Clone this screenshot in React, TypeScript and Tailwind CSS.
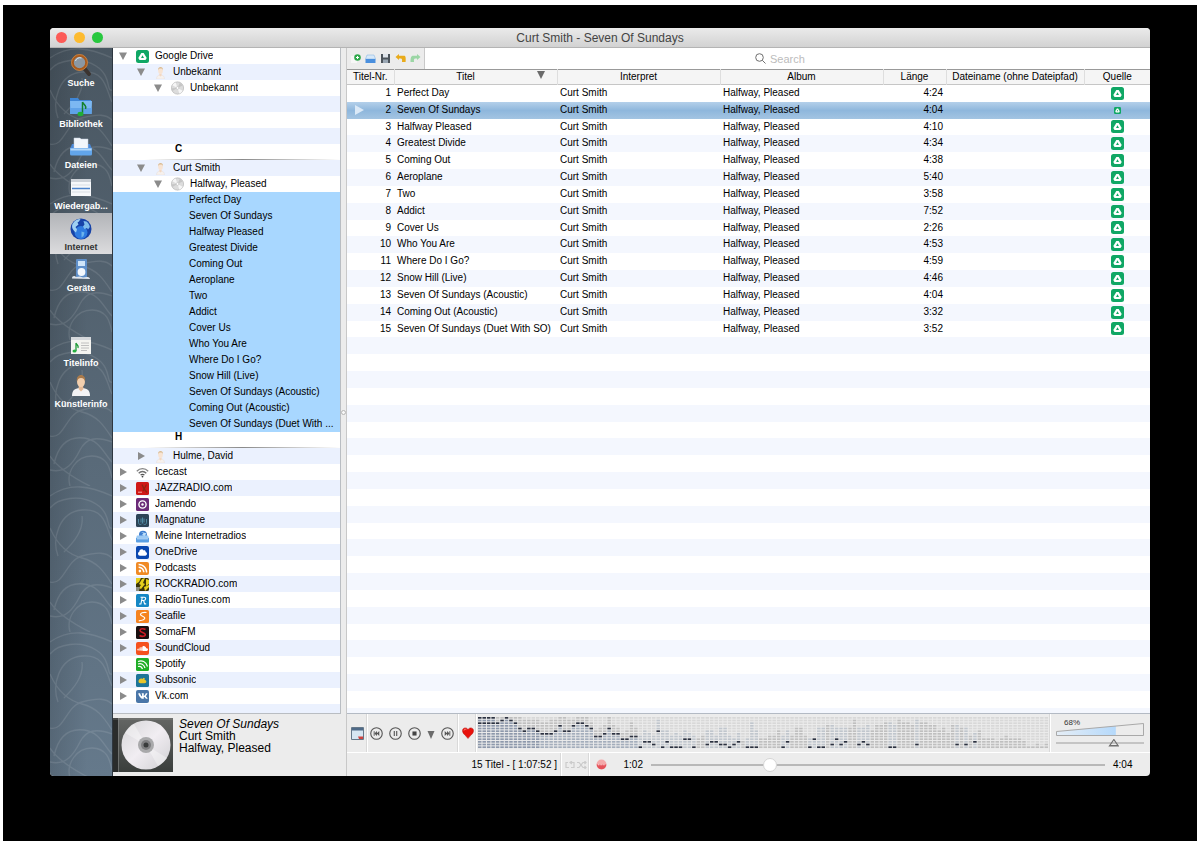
import { useState } from 'react';
import type { ReactNode } from 'react';
import { FaCloud, FaRss, FaSoundcloud, FaVk } from 'react-icons/fa';

interface Track {
  nr: number;
  title: string;
  length: string;
}

const TRACKS: Track[] = [
  { nr: 1, title: 'Perfect Day', length: '4:24' },
  { nr: 2, title: 'Seven Of Sundays', length: '4:04' },
  { nr: 3, title: 'Halfway Pleased', length: '4:10' },
  { nr: 4, title: 'Greatest Divide', length: '4:34' },
  { nr: 5, title: 'Coming Out', length: '4:38' },
  { nr: 6, title: 'Aeroplane', length: '5:40' },
  { nr: 7, title: 'Two', length: '3:58' },
  { nr: 8, title: 'Addict', length: '7:52' },
  { nr: 9, title: 'Cover Us', length: '2:26' },
  { nr: 10, title: 'Who You Are', length: '4:53' },
  { nr: 11, title: 'Where Do I Go?', length: '4:59' },
  { nr: 12, title: 'Snow Hill (Live)', length: '4:46' },
  { nr: 13, title: 'Seven Of Sundays (Acoustic)', length: '4:04' },
  { nr: 14, title: 'Coming Out (Acoustic)', length: '3:32' },
  { nr: 15, title: 'Seven Of Sundays (Duet With SO)', length: '3:52' },
];

const EMPTY_ROWS = Array.from({ length: 22 }, (_, i) => i);

/* ---------- small icons ---------- */

function DriveIcon({ className = 'size-[13px]' }: { className?: string }) {
  return (
    <svg viewBox="0 0 13 13" className={className} aria-hidden="true">
      <rect width="13" height="13" rx="2.500" fill="#10a765" />
      <path d="M5.300 2.900h2.400l3 5.100-1.200 2.100h-6L2.300 8z" fill="#fff" />
      <path d="M6.500 5.200 8 7.900H5z" fill="#10a765" />
    </svg>
  );
}

function PersonIcon() {
  return (
    <svg viewBox="0 0 13 13" className="size-[13px]" aria-hidden="true">
      <path d="M2.500 13c0-3 2-4.200 4-4.200s4 1.200 4 4.200z" fill="#f6f1ee" stroke="#e4dcd6" strokeWidth=".4" />
      <path d="M5.600 7.500h1.800l.3 2-1.200 1-1.200-1z" fill="#f3d8c2" />
      <ellipse cx="6.500" cy="4.800" rx="2.300" ry="3.200" fill="#f8e4d3" />
      <path d="M4.100 4.400C3.900 1.700 5.200 1 6.600 1s2.600 1 2.300 3.400C8.400 2.800 7.800 2.600 6.500 2.600S4.500 3 4.100 4.400z" fill="#d9bb92" />
    </svg>
  );
}

function DiscIcon() {
  return (
    <svg viewBox="0 0 14 14" className="size-[14px]" aria-hidden="true">
      <circle cx="7" cy="7" r="6.600" fill="#dcdcdc" stroke="#b4b4b4" strokeWidth=".7" />
      <path d="M7 7 1.500 4A6.300 6.300 0 0 1 5 1.200zM7 7l5.600 3A6.300 6.300 0 0 1 9 12.900z" fill="#f6f6f6" />
      <path d="M7 7 9.500 1.400a6.300 6.300 0 0 1 3 3zM7 7l-5.600 3.200a6 6 0 0 1-.7-3z" fill="#c6c6c6" />
      <circle cx="7" cy="7" r="1.500" fill="#fff" stroke="#aaa" strokeWidth=".5" />
    </svg>
  );
}

function Tile({ fill, children }: { fill: string; children?: ReactNode }) {
  return (
    <svg viewBox="0 0 13 13" className="size-[13px]" aria-hidden="true">
      <rect width="13" height="13" rx="1.500" fill={fill} />
      {children}
    </svg>
  );
}

function WifiIcon() {
  return (
    <svg viewBox="0 0 13 13" className="size-[13px]" fill="none" stroke="#858585" strokeWidth="1.300" aria-hidden="true">
      <path d="M.8 5.200c3.200-3.400 8.200-3.400 11.400 0" />
      <path d="M2.700 7.200c2.200-2.300 5.400-2.300 7.600 0" stroke="#707070" />
      <path d="M4.600 9.100c1.100-1.100 2.700-1.100 3.800 0" stroke="#555" />
      <circle cx="6.500" cy="10.600" r=".9" fill="#444" stroke="none" />
    </svg>
  );
}

function RadioFolderIcon() {
  return (
    <svg viewBox="0 0 14 13" className="h-[13px] w-[14px]" aria-hidden="true">
      <circle cx="7.500" cy="4.500" r="4.300" fill="#3f7fd0" />
      <path d="M5 1.500 8 3 6.500 5l3 1.500L11 3z" fill="#bfe0fa" />
      <path d="M1 5.500h12l1 3H0z" fill="#9ccaf4" />
      <path d="M0 8h14v4a1 1 0 0 1-1 1H1a1 1 0 0 1-1-1z" fill="#5b9fe3" />
      <path d="M1 8.500h12v1H1z" fill="#cfe6fb" />
    </svg>
  );
}

function Arrow({ open }: { open: boolean }) {
  return (
    <svg viewBox="0 0 10 10" className="size-[10px]" aria-hidden="true">
      <path d={open ? 'M1 1.500h8L5 9z' : 'M2 1v8l7-4z'} fill="#8b8b8b" />
    </svg>
  );
}

function Badge({ className, children }: { className: string; children: ReactNode }) {
  return <span className={`flex size-[13px] items-center justify-center rounded-xs text-white ${className}`}>{children}</span>;
}

const SERVICES: { name: string; leaf?: boolean; icon: ReactNode }[] = [
  { name: 'Icecast', icon: <WifiIcon /> },
  {
    name: 'JAZZRADIO.com',
    icon: (
      <Tile fill="#cf1818">
        <path d="M6 2.500 8 7l3 3.500M10.500 2.500 7 9" stroke="#8f2413" strokeWidth="1.300" fill="none" />
        <path d="M2 10.200h4" stroke="#f5a9a0" />
      </Tile>
    ),
  },
  {
    name: 'Jamendo',
    icon: (
      <Tile fill="#6b2a78">
        <circle cx="6.500" cy="6.500" r="3.600" fill="none" stroke="#fff" strokeWidth="1.400" />
        <circle cx="6.500" cy="6.500" r="1.200" fill="#fff" />
      </Tile>
    ),
  },
  {
    name: 'Magnatune',
    icon: (
      <Tile fill="#2d4457">
        <path d="M2.500 5v3.500c0 2 2 2.500 3 1.500M10.500 5v3.500c0 2-2 2.500-3 1.500M5 4.500v4M6.500 3.500v6M8 4.500v4" stroke="#5592ab" strokeWidth=".9" fill="none" />
      </Tile>
    ),
  },
  { name: 'Meine Internetradios', icon: <RadioFolderIcon /> },
  { name: 'OneDrive', icon: <Badge className="bg-[#0a47b0]"><FaCloud className="size-[9px]" /></Badge> },
  { name: 'Podcasts', icon: <Badge className="bg-[#f08a24]"><FaRss className="size-[10px]" /></Badge> },
  {
    name: 'ROCKRADIO.com',
    icon: (
      <Tile fill="#3a3408">
        <path d="M0 0h5L3 4 0 6zM6 1l3-1-2 5 2 1-4 5-2-1 2-3-2-1zM10 1l3 1v4l-3 2zM8 9l5-2v2l-4 4z" fill="#e5cf1c" />
        <path d="M0 9h4l-1 4H0z" fill="#8d8d7d" />
      </Tile>
    ),
  },
  {
    name: 'RadioTunes.com',
    icon: (
      <Tile fill="#1587c4">
        <path d="M4.500 3.200h3.600c2.200 0 2 3.200-.3 3.300H5.600M6.300 3.200 4.900 10H3M7.600 6.500l1 3.400h1.600" stroke="#fff" strokeWidth="1.100" fill="none" />
      </Tile>
    ),
  },
  {
    name: 'Seafile',
    icon: (
      <Tile fill="#f5831f">
        <path d="M10.500 2.500C7 2 4.500 3 4.500 4.600S9 6.300 8.800 8 5.500 10.500 2.800 10.800" stroke="#fff" strokeWidth="1.200" fill="none" />
      </Tile>
    ),
  },
  {
    name: 'SomaFM',
    icon: (
      <Tile fill="#1a1010">
        <path d="M9.500 3.500C7.500 2.300 4 2.300 4 4.500S9.300 6.200 9.300 8.500 5.500 10.700 3.500 9.500" stroke="#d01c24" strokeWidth="1.600" fill="none" />
      </Tile>
    ),
  },
  { name: 'SoundCloud', icon: <Badge className="bg-[#f5511e]"><FaSoundcloud className="size-[11px]" /></Badge> },
  {
    name: 'Spotify',
    leaf: true,
    icon: (
      <Tile fill="#1fae27">
        <path d="M2 3.500c4-1.500 8 0 9.500 5M2 6c3-1 6 .2 7 4M2 8.500c2-.6 3.700.2 4.500 2.500" stroke="#fff" strokeWidth="1.200" fill="none" />
      </Tile>
    ),
  },
  {
    name: 'Subsonic',
    icon: (
      <Tile fill="#1d7599">
        <path d="M2.500 7.500C2.500 5 5 4 6.500 5l1-1.200L9 4.500l-.6 1.200C11 6 11 9 8.500 9.200H4.500c-1.200 0-2-.7-2-1.700z" fill="#e8c52a" />
      </Tile>
    ),
  },
  { name: 'Vk.com', icon: <Badge className="bg-[#4a76a8]"><FaVk className="size-[10px]" /></Badge> },
];

/* ---------- left icon bar ---------- */

const NAV_ICONS = {
  search: (
    <>
      <path d="m15 15 5 6" stroke="#3b3430" strokeWidth="4" strokeLinecap="round" />
      <circle cx="10.500" cy="9.500" r="7" fill="#8b98a3" stroke="#a85a1c" strokeWidth="2.600" />
      <circle cx="10.500" cy="9.500" r="8" fill="none" stroke="#e09a52" strokeWidth=".6" />
      <path d="M6.500 8a4.500 4.500 0 0 1 6-3" stroke="#e2e8ee" fill="none" />
    </>
  ),
  library: (
    <>
      <path d="M1 4h8l1.500 2H22v14H1z" fill="#3f86d6" />
      <path d="M1 7h22l-.5 13h-21z" fill="#7cb8f2" />
      <path d="M1 14h22l-.5 6h-21z" fill="#5fa2e8" />
      <path d="M13.500 8v11M13.500 8c1 3 4.500 3 3 7" stroke="#14802c" strokeWidth="1.500" fill="none" />
      <ellipse cx="11.500" cy="20" rx="3" ry="2.200" fill="#1fae35" />
    </>
  ),
  files: (
    <>
      <path d="M3 9h18l2 5H1z" fill="#4a88d8" />
      <path d="M5 3h6l1 1h7v11H5z" fill="#f2f6fb" stroke="#c2cedd" strokeWidth=".5" />
      <path d="M1 13h22v6a1.500 1.500 0 0 1-1.500 1.500h-19A1.500 1.500 0 0 1 1 19z" fill="#62a5ea" />
      <path d="M1.500 13.500h21v2h-21z" fill="#b3d7f8" />
    </>
  ),
  playlist: (
    <>
      <path d="M2 3h20v17H2z" fill="#f6f8fa" />
      <path d="M2 3h20v3H2z" fill="#cdd2d8" />
      <path d="M3 12.500h18" stroke="#4d84cc" strokeWidth="1.300" />
      <path d="M3 9h18M3 16h18" stroke="#d9dee4" />
    </>
  ),
  globe: (
    <>
      <circle cx="12" cy="12" r="10.500" fill="#1743a8" />
      <circle cx="12" cy="15.500" r="6.500" fill="#2f7be0" />
      <path d="M3.500 7C6 3 9 1.900 11.500 2L10 4.500 8.500 5.500l1 2-3 2.500 1.500 2.500-1 3c-3-2-4.800-5-3.500-8.500z" fill="#9fd0f2" />
      <path d="m14.500 4 3 .5c2 1.500 3.300 4 3.300 5.500l-1.800 2.500-1-1.500-2.500 1-1.500-2.500 1.500-2z" fill="#7fbdec" />
      <path d="m12.500 14.500 3 1-1 3.500-2 1.500z" fill="#6db4ec" />
    </>
  ),
  device: (
    <>
      <rect x="7" y="1" width="11" height="19" rx="1" fill="#5f8fc9" />
      <rect x="9" y="3" width="7" height="5" fill="#cfe4f8" />
      <circle cx="12.500" cy="14" r="3.900" fill="#f3f7fc" />
      <path d="M3 20.500c0-3 3-3 4-1.500l4-.5 3 1c3-1 7-1 7 1.500z" fill="#dfe5ec" />
    </>
  ),
  title: (
    <>
      <path d="M2 4h20v17H2z" fill="#f4f4f0" />
      <path d="M2 4h20v3H2z" fill="#d5d8dc" />
      <path d="M12 10h8M12 12.500h8M12 15h8M12 17.500h6" stroke="#b9b9b9" strokeWidth=".9" />
      <path d="M7 10v8M7 10c.5 2 3 2 2 5" stroke="#1f9b36" strokeWidth="1.300" fill="none" />
      <ellipse cx="5.500" cy="18" rx="2" ry="1.500" fill="#27b040" />
    </>
  ),
  artist: (
    <>
      <path d="M3 22c0-6 3-8 9-8s9 2 9 8z" fill="#f2f2f4" />
      <path d="M10 11h4l.5 4-2.500 2.500L9.500 15z" fill="#e5b995" />
      <ellipse cx="12" cy="7.500" rx="4" ry="5.500" fill="#f2cfae" />
      <path d="M8 8c-.8-5 1.500-7 4-7s4.800 2 4 7c-.5-3-1.500-4-4-4s-3.500 1-4 4z" fill="#a97a4b" />
    </>
  ),
};

const NAV_MAIN = [
  { label: 'Suche', icon: NAV_ICONS.search },
  { label: 'Bibliothek', icon: NAV_ICONS.library },
  { label: 'Dateien', icon: NAV_ICONS.files },
  { label: 'Wiedergab...', icon: NAV_ICONS.playlist },
  { label: 'Internet', icon: NAV_ICONS.globe },
  { label: 'Geräte', icon: NAV_ICONS.device },
];

const NAV_INFO = [
  { label: 'Titelinfo', icon: NAV_ICONS.title },
  { label: 'Künstlerinfo', icon: NAV_ICONS.artist },
];

function NavButton({ label, icon, active, onClick }: { label: string; icon: ReactNode; active: boolean; onClick: () => void }) {
  return (
    <button
      type="button"
      onClick={onClick}
      className={`flex h-[41px] w-full flex-col items-center pt-1 text-[9px] leading-3 font-bold ${
        active ? 'bg-linear-to-b from-[#b2b4b8] to-[#dcdcde] text-[#333]' : 'text-white'
      }`}
    >
      <svg viewBox="0 0 24 24" className="size-6 shrink-0" fill="none" aria-hidden="true">
        {icon}
      </svg>
      {label}
    </button>
  );
}

function NavBar() {
  const [active, setActive] = useState('Internet');

  return (
    <nav className="relative w-[63px] shrink-0 border-r border-[#2e3740] bg-linear-to-b from-[#4a5762] to-[#65798b]">
      <svg className="absolute inset-0 size-full" fill="none" stroke="#fff" strokeOpacity=".1" strokeWidth="1.300" aria-hidden="true">
        <defs>
          <linearGradient id="shade">
            <stop offset="0" stopColor="#000" stopOpacity=".14" />
            <stop offset=".6" stopColor="#000" stopOpacity="0" />
          </linearGradient>
          <pattern id="swirl" width="62" height="146" patternUnits="userSpaceOnUse">
            <path d="M0 10C20-4 40 0 62 10M0 22c8-10 30-14 46-4s10 26 16 24M8 70c-6-16 0-44 24-46s24 18 30 30M0 42c6 14 16 26 32 30s22 14 30 26M14 66c10-10 20-22 18-36M0 96c14 4 16-22 32-26s24-4 30 2M4 124c4-18 14-28 30-26s20 16 28 24M0 130c16 4 24-8 30-20s16-14 32-8M20 146c-4-14 6-30 22-30s18 14 20 22M0 116c8 12 24 22 40 30" />
          </pattern>
        </defs>
        <rect width="100%" height="100%" fill="url(#shade)" stroke="none" />
        <rect width="100%" height="100%" fill="url(#swirl)" stroke="none" />
      </svg>
      <div className="relative pt-px">
        {NAV_MAIN.map((item) => (
          <NavButton key={item.label} {...item} active={active === item.label} onClick={() => setActive(item.label)} />
        ))}
        <div className="h-[34px]" />
        {NAV_INFO.map((item) => (
          <NavButton key={item.label} {...item} active={active === item.label} onClick={() => setActive(item.label)} />
        ))}
      </div>
    </nav>
  );
}

/* ---------- source tree ---------- */

const INDENTS = ['pl-[5px]', 'pl-[23px]', 'pl-10'];

interface TreeRowProps {
  level: number;
  label: string;
  icon: ReactNode;
  open?: boolean;
  leaf?: boolean;
  striped?: boolean;
}

function TreeRow({ level, label, icon, open = false, leaf = false, striped = false }: TreeRowProps) {
  return (
    <li className={`flex h-4 items-center ${INDENTS[level]} ${striped ? 'bg-[#ebf1fe]' : 'bg-white'}`}>
      {leaf ? (
        <span className="w-[10px]" />
      ) : (
        <button type="button" aria-label={`${label} aufklappen`}>
          <Arrow open={open} />
        </button>
      )}
      <span className="mr-[6px] ml-2 flex w-[13px] shrink-0 justify-center">{icon}</span>
      <span className="truncate">{label}</span>
    </li>
  );
}

function LetterRow({ letter }: { letter: string }) {
  return (
    <li className="flex h-4 flex-col justify-between bg-white">
      <span className="pl-[62px] leading-[9px] font-bold">{letter}</span>
      <span className="ml-8 h-px bg-linear-to-r from-transparent via-[#8a8a8a] to-transparent" />
    </li>
  );
}

function SourceTree() {
  return (
    <ul className="flex flex-1 flex-col overflow-hidden border-r border-b border-[#b9bdc2] bg-[#ebf1fe] text-[10px] leading-4">
      <TreeRow level={0} label="Google Drive" icon={<DriveIcon />} open />
      <TreeRow level={1} label="Unbekannt" icon={<PersonIcon />} open striped />
      <TreeRow level={2} label="Unbekannt" icon={<DiscIcon />} open />
      <li className="h-4" />
      <li className="h-4 bg-white" />
      <li className="h-4" />
      <LetterRow letter="C" />
      <TreeRow level={1} label="Curt Smith" icon={<PersonIcon />} open striped />
      <TreeRow level={2} label="Halfway, Pleased" icon={<DiscIcon />} open />
      {TRACKS.map((track) => (
        <li key={track.nr} className="h-4 truncate bg-[#a8d7ff] pl-[76px]">
          {track.title.replace('SO)', '...')}
        </li>
      ))}
      <LetterRow letter="H" />
      <TreeRow level={1} label="Hulme, David" icon={<PersonIcon />} striped />
      {SERVICES.map((service, i) => (
        <TreeRow key={service.name} level={0} label={service.name} icon={service.icon} leaf={service.leaf} striped={i % 2 === 1} />
      ))}
    </ul>
  );
}

function NowPlaying() {
  return (
    <div className="flex h-[62px] shrink-0 gap-[6px] pt-[4px]">
      <svg viewBox="0 0 60 54" className="h-[54px] w-[60px] shrink-0" aria-hidden="true">
        <defs>
          <linearGradient id="case" x2="0" y2="1">
            <stop offset="0" stopColor="#646664" />
            <stop offset="1" stopColor="#3a3e3c" />
          </linearGradient>
          <linearGradient id="disc" x2="1" y2="1">
            <stop offset="0" stopColor="#d5d5d7" />
            <stop offset=".5" stopColor="#f1edf2" />
            <stop offset="1" stopColor="#cfcfd2" />
          </linearGradient>
        </defs>
        <rect width="60" height="54" fill="url(#case)" />
        <rect width="5" height="54" fill="#2a2c2b" />
        <path d="M5.500 0v54M0 1h60" stroke="#8a8c8a" strokeWidth=".6" />
        <circle cx="33" cy="27" r="24.500" fill="url(#disc)" />
        <path d="M33 27 12 15a24 24 0 0 1 9-9zM33 27l21 13a24 24 0 0 1-9 8z" fill="#fff" opacity=".35" />
        <circle cx="33" cy="27" r="8" fill="#a9a9ab" />
        <circle cx="33" cy="27" r="5" fill="#7e7e80" />
        <circle cx="33" cy="27" r="2.500" fill="#393b3b" />
      </svg>
      <div className="text-[12px] leading-3">
        <p className="italic">Seven Of Sundays</p>
        <p>Curt Smith</p>
        <p>Halfway, Pleased</p>
      </div>
    </div>
  );
}

/* ---------- playlist ---------- */

const TOOLS = [
  {
    label: 'Neu',
    icon: (
      <>
        <path d="M1 3h6v7H1z" fill="#f7f7f7" />
        <circle cx="7.500" cy="4.500" r="3.300" fill="#2fa84b" />
        <path d="M7.500 3v3M6 4.500h3" stroke="#fff" />
      </>
    ),
  },
  {
    label: 'Öffnen',
    icon: (
      <>
        <path d="M2 2h7l1.500 4h-10z" fill="#d7e8f8" stroke="#7fb0e0" strokeWidth=".5" />
        <path d="M.5 6h10v4h-10z" fill="#4a8fde" />
      </>
    ),
  },
  {
    label: 'Speichern',
    icon: (
      <>
        <path d="M1 1h9v9H1z" fill="#4d545b" />
        <path d="M3 1h5v3.500H3z" fill="#dfe4ea" />
        <path d="M3 6.500h5V10H3z" fill="#9aa7b4" />
      </>
    ),
  },
  { label: 'Rückgängig', icon: <path d="M.5 4 4 1v1.700h5c1.500 0 2 1.500 1.600 6.300H7c.4-3-.3-3.500-1-3.500H4V7z" fill="#e9ab1b" /> },
  { label: 'Wiederholen', icon: <path d="M10.500 4 7 1v1.700H3C1.500 2.700.5 4 .5 9H4c-.3-3 .3-3.500 1-3.500h2V7z" fill="#9bd6a5" /> },
];

function Toolbar() {
  return (
    <div className="flex h-[21px] shrink-0 bg-[#ececec]">
      <div className="flex items-center gap-1 border-r border-[#c9c9c9] px-[3px]">
        {TOOLS.map((tool) => (
          <button key={tool.label} type="button" aria-label={tool.label}>
            <svg viewBox="0 0 11 11" className="size-[11px]" aria-hidden="true">
              {tool.icon}
            </svg>
          </button>
        ))}
      </div>
      <label className="flex flex-1 items-center justify-center gap-1 bg-white">
        <svg viewBox="0 0 11 11" className="size-[11px]" fill="none" stroke="#6f6f6f" aria-hidden="true">
          <circle cx="4.500" cy="4.500" r="3.800" />
          <path d="m7.300 7.300 3.200 3.200" />
        </svg>
        <input type="text" placeholder="Search" aria-label="Suche" className="h-4 w-[50px] text-[11px] leading-4 outline-none placeholder:text-[#bcbcbc]" />
      </label>
    </div>
  );
}

const TH = 'h-[14px] border-r border-[#dedede] font-normal';
const ROW = 'h-[17px] [&:nth-child(6n+3)]:h-4 even:bg-[#f4f7fe]';

function Playlist() {
  const [current] = useState(2);

  return (
    <div className="flex-1 border-b border-[#b3bac4] bg-[#f4f7fe]">
      <table className="w-full table-fixed border-collapse bg-white text-[10px] leading-[14px]">
        <colgroup>
          <col className="w-[47px]" />
          <col className="w-[163px]" />
          <col className="w-[163px]" />
          <col className="w-[163px]" />
          <col className="w-[63px]" />
          <col />
          <col className="w-[66px]" />
        </colgroup>
        <thead className="border-t border-b border-t-[#999] border-b-[#c6c6c6] bg-[#f5f5f5]">
          <tr>
            <th className={TH}>Titel-Nr.</th>
            <th className={TH}>
              <span className="flex items-center">
                <span className="flex-1">Titel</span>
                <svg viewBox="0 0 8 8" className="mr-3 mb-1 size-2" aria-hidden="true">
                  <path d="M0 0h8L4 8z" fill="#6b6b6b" />
                </svg>
              </span>
            </th>
            <th className={TH}>Interpret</th>
            <th className={TH}>Album</th>
            <th className={TH}>Länge</th>
            <th className={`${TH} whitespace-nowrap`}>Dateiname (ohne Dateipfad)</th>
            <th className="font-normal">Quelle</th>
          </tr>
        </thead>
        <tbody>
          {TRACKS.map((track) => {
            const selected = track.nr === current;
            return (
              <tr key={track.nr} className={selected ? 'h-[17px] bg-linear-to-b from-[#b4d0ea] via-[#8fb7dc] to-[#a3c4e2]' : ROW}>
                <td className="pr-[3px]">
                  <span className="flex items-center justify-end">
                    {selected && (
                      <svg viewBox="0 0 9 10" className="mr-auto ml-2 h-[10px] w-[9px]" aria-hidden="true">
                        <path d="M0 0v10l9-5z" fill="#dbe9f7" />
                      </svg>
                    )}
                    {track.nr}
                  </span>
                </td>
                <td className="pl-[3px] whitespace-nowrap">{track.title}</td>
                <td className="pl-[3px]">Curt Smith</td>
                <td className="pl-[3px]">Halfway, Pleased</td>
                <td className="pr-[3px] text-right">{track.length}</td>
                <td />
                <td>
                  <DriveIcon className={selected ? 'mx-auto size-[7px]' : 'mx-auto size-[13px]'} />
                </td>
              </tr>
            );
          })}
          {EMPTY_ROWS.map((row) => (
            <tr key={row} className={ROW}>
              <td colSpan={7} />
            </tr>
          ))}
        </tbody>
      </table>
    </div>
  );
}

/* ---------- spectrum ---------- */

// row of the dark peak marker per column, -1 for none (0 is the top row)
const PEAKS = [
  0, 0, 0, 0, 2, 1, 0, 1, 2, 4, 5, 4, 4, 5, 6, 6, 6, 5, 3, 5, 5, 3, 2, 2, 3, 4, 7, 7, 6, 4, 6, 6,
  8, 8, 7, 7, 11, 9, 9, 10, 5, 11, 9, 11, 11, 11, 8, 8, 11, -1, -1, 10, 9, 9, 10, 10, 11, 10, 9, -1, 11, 11, 11, -1,
  -1, -1, -1, -1, 11, 9, -1, -1, -1, -1, 11, 8, 11, 11, -1, 10, 8, 10, 9, -1, -1, 10, 9, 10, -1, -1, -1, -1, 11, 11, -1, -1,
  -1, -1, 10, -1, -1, -1, -1, -1, -1, -1, -1, 10, -1, 10, -1, 9, -1, -1, -1, -1, -1, -1, -1, -1, -1, -1, -1, -1, -1, -1, -1, -1,
];

// top row of the grey bar per column
const TOPS = [
  0, 0, 0, 0, 0, 0, 0, 0, 0, 0, 1, 1, 1, 1, 2, 2, 1, 1, 0, 0, 1, 1, 0, 0, 0, 2, 5, 4, 3, 0, 3, 4,
  6, 5, 2, 4, 7, 5, 6, 7, 1, 5, 5, 7, 6, 7, 5, 6, 7, 8, 7, 5, 5, 7, 4, 4, 7, 8, 6, 9, 8, 2, 5, 8,
  8, 7, 7, 5, 7, 5, 7, 4, 4, 7, 8, 8, 4, 4, 3, 3, 4, 4, 4, 4, 1, 4, 4, 3, 5, 3, 3, 2, 2, 3, 1, 2,
  2, 3, 1, 2, 2, 3, 3, 5, 4, 6, 3, 3, 4, 4, 7, 6, 5, 8, 8, 8, 9, 8, 7, 8, 8, 8, 9, 11, 11, 10, 11, 10,
];

function cellColor(col: number, row: number) {
  if (row === PEAKS[col] || (col < 4 && row === 2)) return '#2b3140';
  if (col < 36 && PEAKS[col] >= 0 && row > PEAKS[col]) return col < 14 ? '#8d98ab' : '#a3adbb';
  if (row >= TOPS[col]) return col >= 36 && PEAKS[col] >= 0 ? '#c0c6cd' : '#bfbfbf';
  return '#d8d8d8';
}

function Spectrum() {
  return (
    <svg viewBox="0 0 1024 32" preserveAspectRatio="none" className="h-8 w-0 flex-1" aria-hidden="true">
      {PEAKS.map((_, col) =>
        Array.from({ length: 12 }, (_, row) => (
          <rect key={`${col}-${row}`} x={col * 8} y={row * 2.667} width="6.300" height="1.700" fill={cellColor(col, row)} />
        )),
      )}
    </svg>
  );
}

/* ---------- player ---------- */

function RoundButton({ label, children }: { label: string; children: ReactNode }) {
  return (
    <button type="button" aria-label={label}>
      <svg viewBox="0 0 14 14" className="size-[13px]" fill="none" stroke="#555" aria-hidden="true">
        <circle cx="7" cy="7" r="6.200" strokeWidth="1.200" />
        {children}
      </svg>
    </button>
  );
}

function Divider() {
  return <span className="w-[2px] shrink-0 self-stretch border-l border-[#d9d9d9] bg-white" />;
}

function Volume() {
  const [volume, setVolume] = useState(68);

  return (
    <div className="flex w-[88px] shrink-0 flex-col">
      <div className="relative h-[19px]">
        <svg viewBox="0 0 88 19" className="size-full" aria-hidden="true">
          <defs>
            <linearGradient id="volume">
              <stop offset="0" stopColor="#e6eef6" />
              <stop offset="1" stopColor="#b5d9fb" />
            </linearGradient>
            <clipPath id="wedge">
              <path d="M.5 13.500 87.500 5.500v12H.5z" />
            </clipPath>
          </defs>
          <rect width={volume * 0.88} height="19" fill="url(#volume)" clipPath="url(#wedge)" />
          <path d="M.5 13.500 87.500 5.500v12H.5z" fill="none" stroke="#a9a9a9" />
        </svg>
        <span className="absolute top-0 left-2 text-[8px] leading-[10px] text-[#333]">{volume}%</span>
      </div>
      <input
        type="range"
        aria-label="Lautstärke"
        value={volume}
        onChange={(e) => setVolume(Number(e.target.value))}
        className="h-3 w-full appearance-none bg-[linear-gradient(#c4c4c4,#c4c4c4)] bg-size-[100%_2px] bg-center bg-no-repeat [&::-webkit-slider-thumb]:h-[8px] [&::-webkit-slider-thumb]:w-[11px] [&::-webkit-slider-thumb]:appearance-none [&::-webkit-slider-thumb]:bg-[#6f6f6f] [&::-webkit-slider-thumb]:[clip-path:polygon(50%_0,100%_100%,0_100%,50%_0,50%_25%,22%_82%,78%_82%,50%_25%)]"
      />
    </div>
  );
}

function Controls() {
  return (
    <div className="flex h-[38px] items-center pr-[6px] pl-1">
      <button type="button" aria-label="Fenster">
        <svg viewBox="0 0 13 13" className="size-[13px]" aria-hidden="true">
          <path d="M.5.5h12v12H.5z" fill="#d6e6f2" stroke="#66788a" />
          <path d="M1 1h11v2.500H1z" fill="#4f6a88" />
          <path d="M7 9.500h5V12H8z" fill="#cf4440" />
        </svg>
      </button>
      <span className="mx-[2px] flex self-stretch"><Divider /></span>
      <div className="flex items-center gap-[6px]">
        <RoundButton label="Zurück">
          <path d="M4.500 4.500v5" />
          <path d="M10 4.300v5.400L7.200 7zM7.500 4.300v5.400L4.800 7z" fill="#555" stroke="none" />
        </RoundButton>
        <RoundButton label="Pause">
          <path d="M5.700 4.300v5.400M8.300 4.300v5.400" strokeWidth="1.200" />
        </RoundButton>
        <RoundButton label="Stopp">
          <path d="M4.800 4.800h4.400v4.400H4.800z" fill="#444" stroke="none" />
        </RoundButton>
        <button type="button" aria-label="Optionen" className="pt-1">
          <svg viewBox="0 0 8 8" className="size-2" aria-hidden="true">
            <path d="M.5 0h7L4 8z" fill="#6b6b6b" />
          </svg>
        </button>
        <RoundButton label="Weiter">
          <path d="M9.500 4.500v5" />
          <path d="M4 4.300v5.400L6.800 7zM6.500 4.300v5.400L9.200 7z" fill="#555" stroke="none" />
        </RoundButton>
      </div>
      <span className="mx-[3px] flex self-stretch"><Divider /></span>
      <button type="button" aria-label="Lieben">
        <svg viewBox="0 0 12 12" className="size-3" aria-hidden="true">
          <path d="M6 11.500C4.500 9 .5 7 .5 3.800.5.500 4.500 0 6 2.500 7.500 0 11.500.5 11.500 3.800 11.500 7 7.500 9 6 11.500z" fill="#e8110c" stroke="#b50c08" strokeWidth=".5" />
          <path d="M2 3.500C2.200 2.200 3.500 1.800 4.300 2.600" stroke="#ff8a80" fill="none" />
        </svg>
      </button>
      <span className="mx-px flex self-stretch"><Divider /></span>
      <Spectrum />
      <span className="mr-[5px] flex self-stretch"><Divider /></span>
      <Volume />
    </div>
  );
}

function StatusBar() {
  const [position, setPosition] = useState(62);

  return (
    <div className="flex h-6 items-center border-t border-white text-[10px] leading-3">
      <span className="w-[210px] text-right">15 Titel - [ 1:07:52 ]</span>
      <span className="mx-[3px] flex self-stretch"><Divider /></span>
      <button type="button" aria-label="Wiederholung und Zufall">
        <svg viewBox="0 0 22 8" className="h-2 w-[22px]" fill="none" stroke="#cbcbcb" strokeWidth="1.200" aria-hidden="true">
          <path d="M3 1.500H1v5h3M6 6.500h3v-5H5M7 0 5 1.500 7 3" />
          <path d="M12 1.500h2l4 5h3M12 6.500h2l4-5h3M19.500 0 21 1.500 19.500 3M19.500 5 21 6.500 19.500 8" />
        </svg>
      </button>
      <span className="ml-px flex self-stretch"><Divider /></span>
      <button type="button" aria-label="Aufnahme" className="mx-[6px]">
        <svg viewBox="0 0 11 11" className="size-[11px]" aria-hidden="true">
          <circle cx="5.500" cy="5.500" r="5" fill="#f4a9aa" />
          <path d="M.7 5.500h9.600a4.800 4.800 0 0 1-9.600 0z" fill="#e4525a" />
          <path d="M2 5.800h7" stroke="#fbd5d5" strokeDasharray="1 .6" />
        </svg>
      </button>
      <span className="w-[38px] pr-2 text-right">1:02</span>
      <input
        type="range"
        aria-label="Position"
        max={244}
        value={position}
        onChange={(e) => setPosition(Number(e.target.value))}
        className="h-[14px] w-0 flex-1 appearance-none bg-[linear-gradient(#b8b8b8,#b8b8b8)] bg-size-[100%_2px] bg-center bg-no-repeat [&::-webkit-slider-thumb]:size-[14px] [&::-webkit-slider-thumb]:appearance-none [&::-webkit-slider-thumb]:rounded-full [&::-webkit-slider-thumb]:border [&::-webkit-slider-thumb]:border-[#d5d5d5] [&::-webkit-slider-thumb]:bg-white"
      />
      <span className="w-[45px] pl-2">4:04</span>
    </div>
  );
}

export default function App() {
  return (
    <div className="flex min-h-screen bg-white px-[3px] pt-[5px] pb-[6px] font-['Liberation_Sans',Arial,sans-serif] text-black">
      <div className="flex min-w-0 flex-1 bg-black px-[47px] pt-[23px] pb-[65px]">
        <div className="flex min-w-0 flex-1 flex-col overflow-hidden rounded-[4px] bg-[#ececec]">
          <header className="relative flex h-5 shrink-0 items-center justify-center border-b border-[#b4b4b4] bg-linear-to-b from-[#ebebeb] to-[#d2d2d2]">
            <div className="absolute left-[6px] flex gap-[7px]">
              <button type="button" aria-label="Schließen" className="size-[11px] rounded-full bg-[#fc5b57]" />
              <button type="button" aria-label="Minimieren" className="size-[11px] rounded-full bg-[#fdbb2f]" />
              <button type="button" aria-label="Maximieren" className="size-[11px] rounded-full bg-[#28c83f]" />
            </div>
            <h1 className="text-[12px] leading-4 text-[#444]">Curt Smith - Seven Of Sundays</h1>
          </header>

          <div className="flex min-w-0 flex-1">
            <NavBar />
            <aside className="flex w-[228px] shrink-0 flex-col">
              <SourceTree />
              <NowPlaying />
            </aside>
            <div className="flex w-[6px] shrink-0 items-center border-r border-[#c8c8c8]">
              <span className="size-[5px] rounded-full border border-[#b5b5b5] bg-[#f8f8f8]" />
            </div>
            <main className="flex min-w-0 flex-1 flex-col">
              <Toolbar />
              <Playlist />
              <Controls />
              <StatusBar />
            </main>
          </div>
        </div>
      </div>
    </div>
  );
}
